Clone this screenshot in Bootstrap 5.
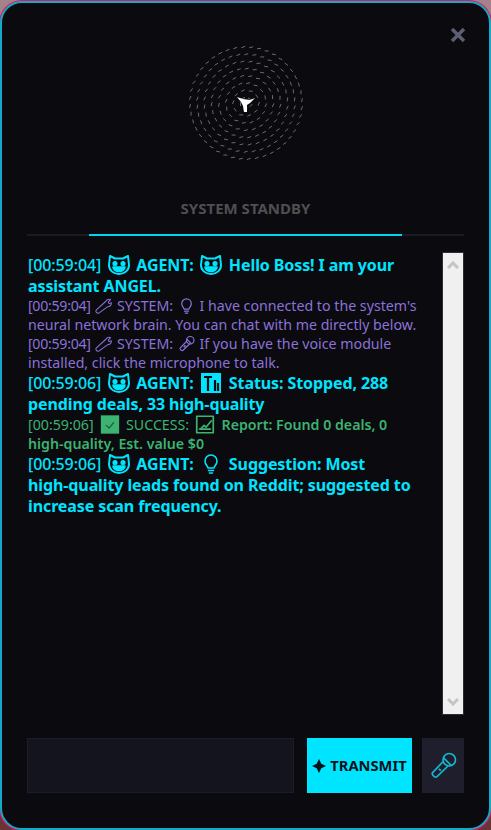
<!DOCTYPE html>
<html lang="en">
<head>
  <meta charset="UTF-8" />
  <meta name="viewport" content="width=device-width, initial-scale=1" />
  <title>Angel Assistant</title>
  <link href="https://cdn.jsdelivr.net/npm/bootstrap@5.3.0/dist/css/bootstrap.min.css" rel="stylesheet" />
  <style>
    html, body { height: 100%; }
    body {
      margin: 0;
      background: linear-gradient(#a5828a, #6b3238);
      font-family: "Noto Sans", "Liberation Sans", sans-serif;
      overflow: hidden;
    }
    .hud-window {
      height: 829px;
      margin-top: 1px;
      background: #0a0a0f;
      border: 2px solid #14a9c6;
      box-shadow: 0 0 0 1px #e0155f;
      border-radius: 22px;
      padding: 0 25px 35px;
    }
    .hud-close { top: 19px; right: 22px; width: 18px; height: 26px; color: #5c5f70; }
    .orb-zone { height: 177px; padding-top: 40px; }
    .status-label {
      height: 54px;
      padding-top: 17px;
      color: #4f4f4f;
      font-size: 15px;
      font-weight: 700;
    }
    .scan-track { height: 2px; background: #1a1a24; margin-bottom: 16px; }
    .scan-fill { left: 62px; width: 313px; height: 2px; background: #00d5ef; }
    .log-row { height: 463px; }
    .chat-log { padding: 3px 0 0 1px; font-size: 16px; line-height: 21.1px; }
    .msg-agent { color: #00e5ff; font-weight: 700; letter-spacing: -.1px; }
    .msg-system { color: #8a72d8; font-size: 14.2px; line-height: 18.9px; }
    .msg-success { color: #3cb371; font-size: 14.2px; line-height: 18.9px; font-weight: 600; }
    .stamp { font-weight: 500; }
    .msg-system .stamp { font-weight: 400; letter-spacing: -.3px; }
    .msg-success .plain, .msg-success .stamp { font-weight: 400; }
    .ico { width: 19px; height: 18px; vertical-align: -4px; fill: none; stroke: currentColor; stroke-width: 1.6; stroke-linecap: round; stroke-linejoin: round; }
    .ico-wide { width: 24px; height: 20px; margin: 0 1.5px; }
    .ico-mid { width: 22px; height: 19px; margin: 0 1.5px; }
    .fake-scroll { width: 22px; background: #f0f0f0; border: 1px solid #2c2c33; color: #c4c4c4; padding: 8px 0; }
    .compose-row { margin-top: 23px; height: 55px; }
    .compose-input { width: 267px; background: #14141e; border: 1px solid #1d1d29; }
    .transmit-btn {
      width: 105px;
      margin-left: 13px;
      padding: 0;
      border: 0;
      border-radius: 0;
      background: #00e5ff;
      color: #06121a;
      font-size: 14.7px;
      font-weight: 700;
    }
    .mic-btn { width: 42px; margin-left: 10px; padding: 0; border: 0; border-radius: 0; background: #1e1e2c; color: #14b8d0; }
  </style>
</head>
<body>
<svg width="0" height="0" class="position-absolute">
  <symbol id="i-cat" viewBox="0 0 24 20">
    <path d="M3 1l5 2.500h8L21 1l1 9c0 5-4 9-10 9S2 15 2 10z" stroke-width="2" />
    <circle cx="8" cy="8.500" r="1.800" fill="currentColor" />
    <circle cx="16" cy="8.500" r="1.800" fill="currentColor" />
    <path d="M6 12h12c0 3-3 4.500-6 4.500S6 15 6 12z" fill="currentColor" />
  </symbol>
  <symbol id="i-wrench" viewBox="0 0 24 20">
    <path d="M3 15l12-11c1-2 4-3 6-2l-3 3 1 2 3-1c0 3-2 5-5 5L6 19c-2 1-5-2-3-4z" stroke-width="1.300" />
  </symbol>
  <symbol id="i-bulb" viewBox="0 0 24 20">
    <path d="M9 14c0-2-3-3-3-7a6 6 0 0 1 12 0c0 4-3 5-3 7z" />
    <path d="M9.500 16.500h5M10.500 19h3" />
  </symbol>
  <symbol id="i-mic" viewBox="0 0 24 24">
    <circle cx="17" cy="7" r="5" />
    <path d="M12.500 8L3.500 17.500q-.5 1 .5 2l1 1q1 .8 2 .2L16 12M12.500 5.500l6 6" />
    <path d="M9 15.500l1-1" stroke-width="2.200" />
  </symbol>
  <symbol id="i-bars" viewBox="0 0 24 20">
    <rect x="2" y="0" width="20" height="20" fill="currentColor" stroke="none" />
    <path d="M5 4h8M9 4v14M16 7v11M19 10v8" stroke="#0a0a0f" stroke-width="2.200" stroke-linecap="butt" />
  </symbol>
  <symbol id="i-tick" viewBox="0 0 24 20">
    <rect x="2" y="0" width="20" height="20" fill="currentColor" stroke="none" />
    <path d="M8 11l3 3 5-6" stroke="#1c5c3a" stroke-width="1.400" />
  </symbol>
  <symbol id="i-report" viewBox="0 0 24 20">
    <rect x="3" y="1" width="18" height="18" stroke-width="1.900" />
    <path d="M6 15h12M7 15l4-4 2 2 6-7" stroke-width="1.800" />
  </symbol>
</svg>

<div class="hud-window position-relative d-flex flex-column">
  <svg class="hud-close position-absolute" viewBox="0 0 18 18" fill="none" stroke="currentColor" stroke-width="3.500"><path d="M3 3l12 12M15 3L3 15" /></svg>

  <div class="orb-zone d-flex justify-content-center">
    <svg id="orb" width="120" height="120" viewBox="-60 -60 120 120"></svg>
  </div>

  <div class="status-label text-center">SYSTEM STANDBY</div>
  <div class="scan-track position-relative"><div class="scan-fill position-absolute"></div></div>

  <div class="log-row d-flex">
    <div class="chat-log flex-grow-1">
      <div class="msg-agent"><span class="stamp">[00:59:04]</span> <svg class="ico ico-wide"><use href="#i-cat" /></svg> AGENT: <svg class="ico ico-wide"><use href="#i-cat" /></svg> Hello Boss! I am your<br />assistant ANGEL.</div>
      <div class="msg-system"><span class="stamp">[00:59:04]</span> <svg class="ico"><use href="#i-wrench" /></svg> SYSTEM: <svg class="ico"><use href="#i-bulb" /></svg> I have connected to the system's<br />neural network brain. You can chat with me directly below.</div>
      <div class="msg-system"><span class="stamp">[00:59:04]</span> <svg class="ico"><use href="#i-wrench" /></svg> SYSTEM: <svg class="ico"><use href="#i-mic" /></svg> If you have the voice module<br />installed, click the microphone to talk.</div>
      <div class="msg-agent"><span class="stamp">[00:59:06]</span> <svg class="ico ico-wide"><use href="#i-cat" /></svg> AGENT: <svg class="ico ico-wide"><use href="#i-bars" /></svg> Status: Stopped, 288<br />pending deals, 33 high-quality</div>
      <div class="msg-success"><span class="plain"><span class="stamp">[00:59:06]</span> <svg class="ico ico-mid"><use href="#i-tick" /></svg> SUCCESS:</span> <svg class="ico ico-mid"><use href="#i-report" /></svg> Report: Found 0 deals, 0<br />high-quality, Est. value $0</div>
      <div class="msg-agent"><span class="stamp">[00:59:06]</span> <svg class="ico ico-wide"><use href="#i-cat" /></svg> AGENT: <svg class="ico ico-wide"><use href="#i-bulb" /></svg> Suggestion: Most<br />high-quality leads found on Reddit; suggested to<br />increase scan frequency.</div>
    </div>
    <div class="fake-scroll d-flex flex-column justify-content-between align-items-center">
      <svg width="12" height="8" viewBox="0 0 12 8" fill="none" stroke="currentColor" stroke-width="3"><path d="M1 7l5-5 5 5" /></svg>
      <svg width="12" height="8" viewBox="0 0 12 8" fill="none" stroke="currentColor" stroke-width="3"><path d="M1 1l5 5 5-5" /></svg>
    </div>
  </div>

  <div class="compose-row d-flex">
    <div class="compose-input"></div>
    <button type="button" class="btn transmit-btn d-flex align-items-center justify-content-center gap-1">
      <svg width="14" height="14" viewBox="0 0 12 12" fill="currentColor"><path d="M6 0l2 4 4 2-4 2-2 4-2-4-4-2 4-2z" /></svg>
      TRANSMIT
    </button>
    <button type="button" class="btn mic-btn d-flex align-items-center justify-content-center">
      <svg width="30" height="30" viewBox="0 0 24 24" fill="none" stroke="currentColor" stroke-width="1.300" stroke-linejoin="round"><use href="#i-mic" /></svg>
    </button>
  </div>
</div>

<script>
  // particle orb: rings of short dashes around the core
  const orb = document.getElementById('orb');
  let marks = '';
  for (let r = 5.6; r <= 56.1; r += 7.2) {
    const count = Math.max(5, Math.round(r * 0.78));
    for (let i = 0; i < count; i++) {
      const a = (i / count) * Math.PI * 2 + r * 0.3;
      const x = Math.cos(a) * r, y = Math.sin(a) * r;
      const t = a + Math.PI / 2 + 0.35 * Math.sin(a * 2 + 1);
      const dx = Math.cos(t) * 2, dy = Math.sin(t) * 2;
      marks += `<line x1="${(x - dx).toFixed(1)}" y1="${(y - dy).toFixed(1)}" x2="${(x + dx).toFixed(1)}" y2="${(y + dy).toFixed(1)}" />`;
    }
  }
  orb.innerHTML = `<g stroke="#6a6a70" stroke-width="1">${marks}</g>` +
    '<path d="M-9-6l6 2 7 1 5-2-5 5-3 2v7h-3l-1-6-2-4z" fill="#fff" />';
</script>
<script src="https://cdn.jsdelivr.net/npm/bootstrap@5.3.0/dist/js/bootstrap.bundle.min.js"></script>
</body>
</html>
